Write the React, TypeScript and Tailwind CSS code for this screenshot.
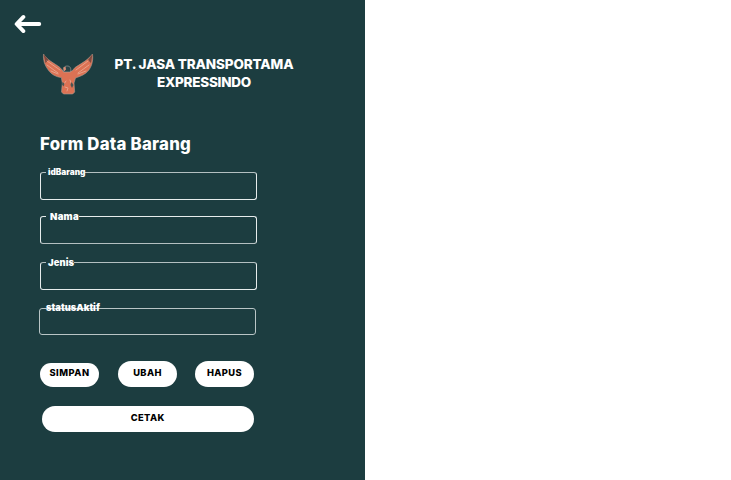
import React from "react";

function BackArrow() {
  return (
    <svg width="28" height="20" viewBox="0 0 28 20" fill="none" stroke="#fff" strokeWidth="3.8" strokeLinecap="round" strokeLinejoin="round" aria-label="Back">
      <path d="M25.3 10H3M9.4 2.900L2.600 10l6.800 7.100" />
    </svg>
  );
}

function BirdLogo() {
  return (
    <svg width="52" height="42" viewBox="0 0 52 42">
      <path d="M1.500 1C5 7 12 10 18 14.500l3 3.500h9l3-3.500C40 10 46 7 50.500 1 51.500 9 49 16 44 20c-4 3-8 4-10.500 5l-1.500 5 .7 9-2 2H21.500l-2-2 .8-9-1-5.500c-5-.5-10-3-13-7.500C2.500 12 1 7 1.500 1Z" fill="#dc7254" stroke="#a89c90" strokeWidth=".6" />
      <path d="M21.500 19c-1-4 1-6 3.700-6 2.800 0 4.300 2 3.300 6Z" fill="#294447" stroke="#a9aaa4" strokeWidth=".6" />
      <path d="M21.500 14.500l2-1 .5 3-2 2Z" fill="#df8e75" />
      <path d="M1.500 1l5 6-3 3ZM50.500 1L46 7l3 3Z" fill="#7d4a40" />
      <g fill="none" stroke="#ecb29c" strokeWidth="1" strokeLinecap="round" opacity=".75">
        <path d="M5 8l13 9M5 12l11 8M9 18l7 3M46 8l-12 9M47 12l-11 8M44 18l-8 3" />
        <path d="M24 28l-2 3M23 34l3 1-1 3M28 27l1 3" />
      </g>
      <path d="M20.500 29l2 1.500-1 3-1.500-2ZM29.500 29l2 3-1.500 3-1.500-3Z" fill="#4c5552" />
    </svg>
  );
}

function Field({ label, box, legend, text }: { label: string; box: string; legend: string; text: string }) {
  return (
    <fieldset className={`w-[217px] rounded-[3px] border ${box}`}>
      <legend className={`h-px leading-[1px] whitespace-nowrap ${legend}`}>
        <span className={`relative font-black text-white ${text}`}>{label}</span>
      </legend>
    </fieldset>
  );
}

function PillButton({ label, className }: { label: string; className: string }) {
  return (
    <button type="button" className={`flex items-center justify-center bg-white font-extrabold text-black text-[9.3px] leading-[12px] ${className}`}>
      {label}
    </button>
  );
}

export default function App() {
  return (
    <div className="h-[480px] w-[731px] overflow-hidden bg-white font-['Inter',sans-serif]">
      <main className="flex h-full w-[365px] flex-col bg-[#1c3d40]">
        <div className="h-[53px] shrink-0 pt-[14px] pl-[14px]">
          <BackArrow />
        </div>
        <header className="flex h-[81px] shrink-0 pl-[42px]">
          <BirdLogo />
          <div className="ml-[10px] mt-[2px] w-[200px] text-center text-[13.5px] leading-[18px] font-extrabold whitespace-nowrap text-white">
            <div className="tracking-[-0.13px]">PT. JASA TRANSPORTAMA</div>
            <div className="tracking-[-0.25px]">EXPRESSINDO</div>
          </div>
        </header>
        <form className="flex flex-col pl-[40px]">
          <h1 className="h-[38px] pt-px text-[16.8px] leading-[19px] font-extrabold tracking-[.24px] whitespace-nowrap text-white">Form Data Barang</h1>
          <Field label="idBarang" box="h-[28px] border-[#e6ecec] border-t-[#b4c0c1]" legend="ml-[5px] pl-[2px]" text="top-[-3px] text-[8.3px]" />
          <Field label="Nama" box="mt-[16px] h-[28px] border-[#e6ecec] border-b-[#b4c0c1]" legend="ml-[5px] pl-[4px]" text="top-[-2px] text-[9.6px] tracking-[.25px]" />
          <Field label="Jenis" box="mt-[18px] h-[28px] border-[#e6ecec] border-t-[#b4c0c1]" legend="ml-[5px] pl-[2px]" text="top-[-2px] text-[9.4px] tracking-[.1px]" />
          <Field label="statusAktif" box="ml-[-1px] mt-[18px] h-[27px] border-[#b9c5c6]" legend="ml-[6px] w-0" text="top-[-3px] text-[9.4px]" />
          <div className="mt-[26px] flex h-[26px] items-end">
            <PillButton label="SIMPAN" className="mr-[19px] h-[24px] w-[59px] rounded-b-[13px] rounded-t-[11px] pb-[4px] tracking-[.5px]" />
            <PillButton label="UBAH" className="mr-[18px] h-[26px] w-[59px] rounded-[13px] pb-[2px] tracking-[.4px]" />
            <PillButton label="HAPUS" className="h-[26px] w-[59px] rounded-[13px] pb-[2px] tracking-[.4px]" />
          </div>
          <PillButton label="CETAK" className="mt-[18.500px] ml-[1.500px] h-[26.500px] w-[212.500px] rounded-[13px] pb-[2px] tracking-[.4px]" />
        </form>
      </main>
    </div>
  );
}
